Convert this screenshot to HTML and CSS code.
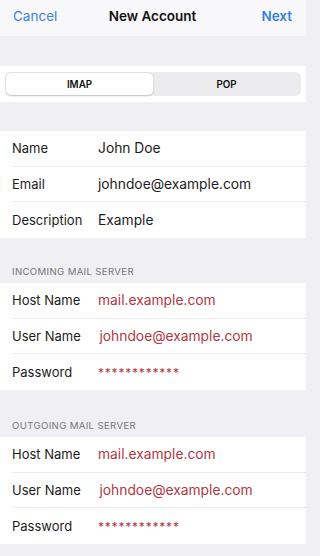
FILE: index.html
```html
<!DOCTYPE html>
<html>
<head>
<meta charset="utf-8">
<link rel="stylesheet" href="styles.css">
</head>
<body>
<div class="screen">
  <header class="navbar">
    <span class="nav-btn cancel">Cancel</span>
    <span class="nav-title">New Account</span>
    <span class="nav-btn next">Next</span>
  </header>
  <div class="gap gap-top"></div>
  <div class="seg-strip">
    <div class="segmented">
      <div class="seg seg-active">IMAP</div>
      <div class="seg">POP</div>
    </div>
  </div>
  <div class="gap gap-mid"></div>
  <div class="group">
    <div class="row"><span class="label">Name</span><span class="value">John Doe</span></div>
    <div class="row"><span class="label">Email</span><span class="value">johndoe@example.com</span></div>
    <div class="row"><span class="label">Description</span><span class="value">Example</span></div>
  </div>
  <div class="section-header">INCOMING MAIL SERVER</div>
  <div class="group">
    <div class="row"><span class="label">Host Name</span><span class="value red">mail.example.com</span></div>
    <div class="row"><span class="label">User Name</span><span class="value red shift">johndoe@example.com</span></div>
    <div class="row"><span class="label">Password</span><span class="value red pw">************</span></div>
  </div>
  <div class="section-header second">OUTGOING MAIL SERVER</div>
  <div class="group">
    <div class="row"><span class="label">Host Name</span><span class="value red">mail.example.com</span></div>
    <div class="row"><span class="label">User Name</span><span class="value red shift">johndoe@example.com</span></div>
    <div class="row"><span class="label">Password</span><span class="value red pw">************</span></div>
  </div>
</div>
</body>
</html>
```
FILE: styles.css
```css
* { box-sizing: border-box; }
html, body {
  margin: 0;
  padding: 0;
  background: #efeff4;
}
body {
  font-family: Inter, "Noto Sans", sans-serif;
  color: #1c1c1e;
  -webkit-font-smoothing: antialiased;
}
.screen {
  width: 306px;
  height: 556px;
  overflow: hidden;
  background: #efeff4;
}
.navbar {
  height: 36px;
  background: #f8f8fa;
  display: grid;
  grid-template-columns: 1fr auto 1fr;
  align-items: center;
  padding: 0 14px 5px 13px;
}
.nav-btn {
  font-size: 13.5px;
  color: #3a82e0;
}
.next { font-weight: 600; justify-self: end; }
.cancel { justify-self: start; }
.nav-title {
  font-size: 13.5px;
  font-weight: 600;
  color: #111;
}
.gap-top { height: 30px; }
.seg-strip {
  height: 36px;
  background: #fff;
  display: flex;
  align-items: center;
  padding: 0 5px;
}
.segmented {
  flex: 1;
  height: 24px;
  background: #ececee;
  border-radius: 6px;
  display: flex;
  padding: 1px;
}
.seg {
  flex: 1;
  display: flex;
  align-items: center;
  justify-content: center;
  font-size: 9.8px;
  font-weight: 600;
  color: #111;
  border-radius: 5px;
}
.seg-active {
  background: #fff;
  box-shadow: 0 0.5px 2px rgba(0,0,0,0.18);
}
.gap-mid { height: 29px; }
.group {
  background: #fff;
}
.row {
  height: 35.67px;
  display: flex;
  align-items: center;
  margin-left: 12px;
  border-bottom: 1px solid #e9e9ee;
}
.row:last-child { border-bottom: none; }
.label {
  width: 86px;
  flex: none;
  font-size: 13px;
  color: #1c1c1e;
}
.value {
  font-size: 13.8px;
  color: #1c1c1e;
}
.red { color: #b3373f; }
.shift { margin-left: 1.5px; }
.pw { font-size: 12px; letter-spacing: 0.8px; }
.section-header {
  height: 45px;
  padding: 0 12px 6px;
  display: flex;
  align-items: flex-end;
  font-size: 9.6px;
  color: #76767b;
  letter-spacing: 0.35px;
}
.section-header.second { height: 47px; }
```
